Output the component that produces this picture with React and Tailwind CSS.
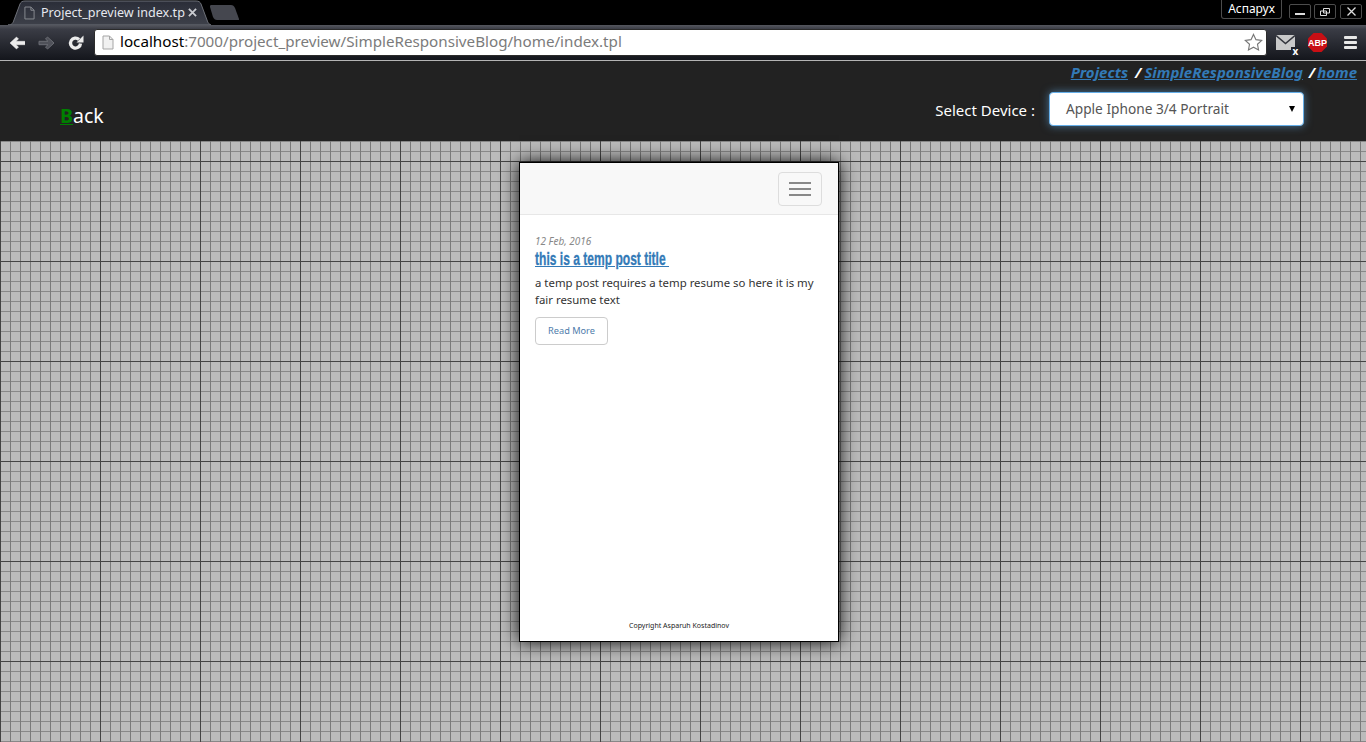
import React from "react";

const F = "font-['Noto_Sans','Open_Sans',sans-serif]";

function DocIcon({ className, fill = "none", stroke = "#8d9096" }) {
  return (
    <svg viewBox="0 0 12 14" className={className}>
      <path d="M1 .5h6.500l3.500 3.500v9.500h-10z" fill={fill} stroke={stroke} />
      <path d="M7.500.5v3.500h3.500" fill="none" stroke={stroke} />
    </svg>
  );
}

function Tab() {
  return (
    <div className="relative w-[204px] h-[25px] ml-[7px] shrink-0">
      <svg viewBox="0 0 204 25" className="absolute inset-0 w-full h-full">
        <defs>
          <linearGradient id="tabg" x1="0" y1="0" x2="0" y2="1">
            <stop offset="0" stopColor="#2a2d38" />
            <stop offset="1" stopColor="#3d4049" />
          </linearGradient>
        </defs>
        <path d="M1 25c4 0 5-2 6-5l6-16c1-2 2-3 5-3h171c3 0 4 1 5 3l6 16c1 3 2 5 6 5z" fill="url(#tabg)" stroke="#6d7078" strokeWidth="1" />
      </svg>
      <div className="relative flex items-center h-[25px] pl-[17px]">
        <DocIcon className="w-[11px] h-[14px] shrink-0" />
        <span className={`ml-[6px] w-[142px] whitespace-nowrap text-[12.600px] leading-[25px] text-[#e6e8ee] ${F}`}>Project_preview index.tp</span>
        <svg viewBox="0 0 10 10" className="w-[9px] h-[9px] ml-[5px] shrink-0">
          <path d="M1 1l8 8M9 1l-8 8" stroke="#c9cbd0" strokeWidth="2" />
        </svg>
      </div>
    </div>
  );
}

function WinBtn({ children, className = "" }) {
  return (
    <div className={`w-[22px] h-[15px] border border-[#4c4c4c] rounded-[2px] flex items-center justify-center bg-black ${className}`}>
      {children}
    </div>
  );
}

function Chrome() {
  return (
    <div className="h-[61px] bg-black">
      <div className="h-[25px] flex items-start justify-between">
        <div className="flex items-start">
          <Tab />
          <svg viewBox="0 0 32 15" className="w-[32px] h-[15px] mt-[5px] -ml-[2px]">
            <path d="M2 0h20c2 0 3 1 4 3l4 11c0 1 0 1-1 1h-21c-2 0-3-1-4-3l-3-10c0-1 0-2 1-2z" fill="#45474f" />
          </svg>
        </div>
        <div className="flex items-start gap-[3px] pr-[4px]">
          <div className={`w-[61px] h-[19px] mr-[4px] border border-[#4c4c4c] border-t-0 rounded-b-[3px] bg-black text-white text-[12px] leading-[18px] text-center ${F}`}>Аспарух</div>
          <div className="flex gap-[3px] mt-[4px]">
            <WinBtn><span className="block w-[10px] h-[2px] bg-[#ddd] mt-[4px]" /></WinBtn>
            <WinBtn>
              <svg viewBox="0 0 10 8" className="w-[10px] h-[8px]"><path d="M3.500.5h6v4.500h-6zM.5 3h6v4.500h-6z" fill="#000" stroke="#ddd" /></svg>
            </WinBtn>
            <WinBtn className="ml-px">
              <svg viewBox="0 0 9 9" className="w-[9px] h-[9px]"><path d="M.5.5l8 8M8.500.5l-8 8" stroke="#ddd" strokeWidth="1.300" /></svg>
            </WinBtn>
          </div>
        </div>
      </div>
      <div className="h-[35px] flex items-center bg-[linear-gradient(#55575f,#3a3c45_12%,#14161c)] pl-[9px] pr-[9px]">
        <svg viewBox="0 0 16 14" className="w-[16px] h-[14px] shrink-0">
          <path d="M1 7l6.500-6 2 2-2.500 2.300h8.500a1 1 0 0 1 .5 3.400h-9l2.500 2.300-2 2z" fill="#ececec" stroke="#ececec" strokeWidth=".5" strokeLinejoin="round" />
        </svg>
        <svg viewBox="0 0 17 14" className="w-[17px] h-[14px] ml-[13px] shrink-0">
          <path d="M16 7l-6.500-6-2 2 2.500 2.300h-9v3.400h9l-2.500 2.300 2 2z" fill="#4f5159" stroke="#6b6d74" strokeWidth="1" strokeLinejoin="round" />
        </svg>
        <svg viewBox="0 0 16 16" className="w-[16px] h-[16px] ml-[13px] shrink-0">
          <path d="M12.500 8.500a5 5 0 1 1-1.500-4" fill="none" stroke="#ececec" strokeWidth="3.300" />
          <path d="M15.500 .5v7h-7z" fill="#ececec" />
        </svg>
        <div className="ml-[10px] w-[1173px] h-[27px] bg-white border border-[#2c2c2c] rounded-[3px] flex items-center shrink-0 pl-[7px] pr-[3px]">
          <DocIcon className="w-[12px] h-[15px] shrink-0" fill="#f1f1f1" stroke="#a5a5a5" />
          <span className={`ml-[6px] -mt-[2px] text-[15.200px] leading-[25px] whitespace-nowrap text-[#7b7b7b] ${F}`}>
            <span className="text-black">localhost</span>:7000/project_preview/SimpleResponsiveBlog/home/index.tpl
          </span>
          <svg viewBox="0 0 20 20" className="w-[19px] h-[19px] ml-auto shrink-0">
            <path d="M10 1.500l2.600 5.500 6 .8-4.400 4.100 1.100 6-5.300-3-5.300 3 1.100-6-4.400-4.100 6-.8z" fill="#fff" stroke="#777" strokeWidth="1.200" />
          </svg>
        </div>
        <div className="relative ml-[9px] w-[19px] h-[15px] shrink-0">
          <svg viewBox="0 0 19 15" className="w-[19px] h-[15px]">
            <path d="M0 0h19v15h-19z" fill="#c9c9c9" />
            <path d="M0 .5l9.500 8 9.500-8" fill="none" stroke="#33353c" strokeWidth="1.500" />
          </svg>
          <span className={`absolute -right-[5px] -bottom-[6px] w-[9px] h-[9px] bg-[#20222a] text-white text-[10px] leading-[8px] font-bold text-center ${F}`}>x</span>
        </div>
        <svg viewBox="0 0 19 19" className="ml-[13px] w-[19px] h-[19px] shrink-0">
          <path d="M5.500 0h8l5.500 5.500v8l-5.500 5.500h-8l-5.500-5.500v-8z" fill="#c80f14" />
          <text x="9.500" y="13" textAnchor="middle" fill="#fff" fontSize="9" fontWeight="700" fontFamily="Liberation Sans">ABP</text>
        </svg>
        <div className="ml-[17px] w-[13px] flex flex-col gap-[2px] shrink-0">
          <span className="h-[3px] rounded-[1px] bg-[#e8e8e8]" />
          <span className="h-[3px] rounded-[1px] bg-[#e8e8e8]" />
          <span className="h-[3px] rounded-[1px] bg-[#e8e8e8]" />
        </div>
      </div>
      <div className="h-px bg-[#b4b4b4]" />
    </div>
  );
}

function Header() {
  return (
    <div className={`h-[80px] bg-[#222222] flex flex-col ${F}`}>
      <div className="flex justify-end pr-[9px] pt-[2px] h-[20px] text-[15px] leading-[18px] font-bold italic whitespace-nowrap">
        <a className="text-[#337ab7] underline">Projects</a>
        <span className="text-white ml-[7px] mr-[3px]">/</span>
        <a className="text-[#337ab7] underline">SimpleResponsiveBlog</a>
        <span className="text-white ml-[6px] mr-[2px]">/</span>
        <a className="text-[#337ab7] underline">home</a>
      </div>
      <div className="flex items-start justify-between pl-[60px] pr-[62px]">
        <div className="mt-[21px] text-[19.500px] leading-[28px] text-white">
          <span className="text-[#008000] font-bold underline">B</span>ack
        </div>
        <div className="flex items-start mt-[11px]">
          <span className="mt-[8px] text-[15px] leading-[20px] text-white mr-[14px]">Select Device :</span>
          <div className="w-[255px] h-[34px] bg-white border border-[#66afe9] rounded-[4px] shadow-[0_0_8px_rgba(102,175,233,0.6)] flex items-center justify-between pl-[16px] pr-[8px] text-[13.700px] text-[#555555]">
            <span>Apple Iphone 3/4 Portrait</span>
            <span className="w-0 h-0 border-x-[3.500px] border-x-transparent border-t-[6px] border-t-black" />
          </div>
        </div>
      </div>
    </div>
  );
}

function Device() {
  return (
    <div className={`w-[320px] h-[480px] bg-white border border-black shadow-[0_0_18px_rgba(0,0,0,1)] flex flex-col ${F}`}>
      <div className="h-[52px] bg-[#f8f8f8] border-b border-[#e7e7e7] flex justify-end items-start pt-[9px] pr-[16px] shrink-0">
        <div className="w-[44px] h-[34px] border border-[#dddddd] rounded-[4px] flex flex-col items-center justify-center gap-[4px]">
          <span className="w-[22px] h-[2px] bg-[#888888]" />
          <span className="w-[22px] h-[2px] bg-[#888888]" />
          <span className="w-[22px] h-[2px] bg-[#888888]" />
        </div>
      </div>
      <div className="px-[15px] pt-[19px] flex-1 flex flex-col items-start">
        <div className="text-[10px] leading-[14px] italic text-[#888888]">12 Feb, 2016</div>
        <a className="mt-px origin-left scale-x-[0.67] text-[#337ab7] underline font-['Liberation_Sans',sans-serif] font-bold text-[18px] leading-[20px] whitespace-pre [-webkit-text-stroke:0.3px_#337ab7]">this is a temp post title </a>
        <p className="mt-[5px] text-[11.400px] leading-[17px] text-[#333333]">a temp post requires a temp resume so here it is my fair resume text</p>
        <div className="mt-[9px] w-[73px] h-[28px] border border-[#cccccc] rounded-[4px] flex items-center justify-center text-[9.200px] text-[#4f7cab]">Read More</div>
      </div>
      <div className="h-[20px] text-center text-[7px] leading-[10px] text-[#222222] shrink-0">Copyright Asparuh Kostadinov</div>
    </div>
  );
}

export default function App() {
  return (
    <div className="h-[742px] w-[1366px] overflow-hidden flex flex-col">
      <Chrome />
      <Header />
      <div className="flex-1 flex justify-center items-start pt-[21px] pr-[8px] bg-[#bbbbbb] bg-[linear-gradient(#444444_1px,transparent_1px),linear-gradient(90deg,#444444_1px,transparent_1px),linear-gradient(90deg,#7a7a7a_1px,transparent_1px),linear-gradient(#888888_1px,transparent_1px)] bg-[size:100px_100px,100px_100px,10px_10px,10px_10px] bg-[position:0_20px,0_0,0_0,0_0]">
        <Device />
      </div>
    </div>
  );
}
